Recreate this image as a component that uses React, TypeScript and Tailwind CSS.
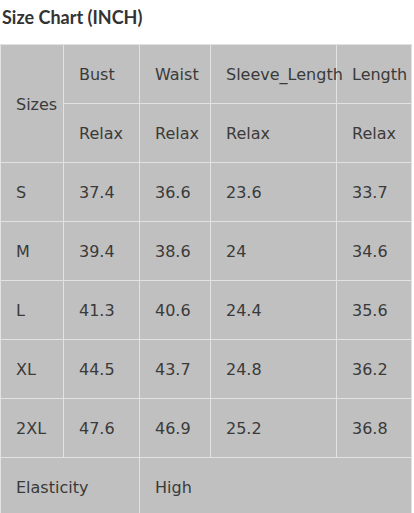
import React from "react";

const font = { fontFamily: '"DejaVu Sans", sans-serif' };

function Cell({ children, className = "" }: { children?: React.ReactNode; className?: string }) {
  return (
    <div className={`bg-[#c0c0c0] flex items-center pl-[15px] pt-[2px] whitespace-nowrap text-[16px] text-[#3a3a3a] ${className}`}>
      {children}
    </div>
  );
}

export default function App() {
  const rows = [
    ["S", "37.4", "36.6", "23.6", "33.7"],
    ["M", "39.4", "38.6", "24", "34.6"],
    ["L", "41.3", "40.6", "24.4", "35.6"],
    ["XL", "44.5", "43.7", "24.8", "36.2"],
    ["2XL", "47.6", "46.9", "25.2", "36.8"],
  ];
  return (
    <div className="bg-white w-[414px] h-[513px] overflow-hidden" style={font}>
      <div
        className="h-[44px] pl-[2px] pt-[4px] text-[18px] font-bold text-[#333]"
        style={{ fontFamily: 'Lato, "DejaVu Sans", sans-serif' }}
      >
        Size Chart (INCH)
      </div>
      <div className="w-[412px] grid grid-cols-[62px_75px_70px_125px_74px] auto-rows-[58px] gap-px p-px bg-[#e2e2e2]">
        <Cell className="row-span-2">Sizes</Cell>
        <Cell>Bust</Cell>
        <Cell>Waist</Cell>
        <Cell className="pl-[13px] relative z-10">Sleeve_Length</Cell>
        <Cell>Length</Cell>
        <Cell>Relax</Cell>
        <Cell>Relax</Cell>
        <Cell className="pl-[13px]">Relax</Cell>
        <Cell>Relax</Cell>
        {rows.map((r) =>
          r.map((v, i) => (
            <Cell key={r[0] + i} className={i === 3 ? "pl-[13px]" : ""}>{v}</Cell>
          ))
        )}
        <Cell className="col-span-2">Elasticity</Cell>
        <Cell className="col-span-3">High</Cell>
      </div>
    </div>
  );
}
